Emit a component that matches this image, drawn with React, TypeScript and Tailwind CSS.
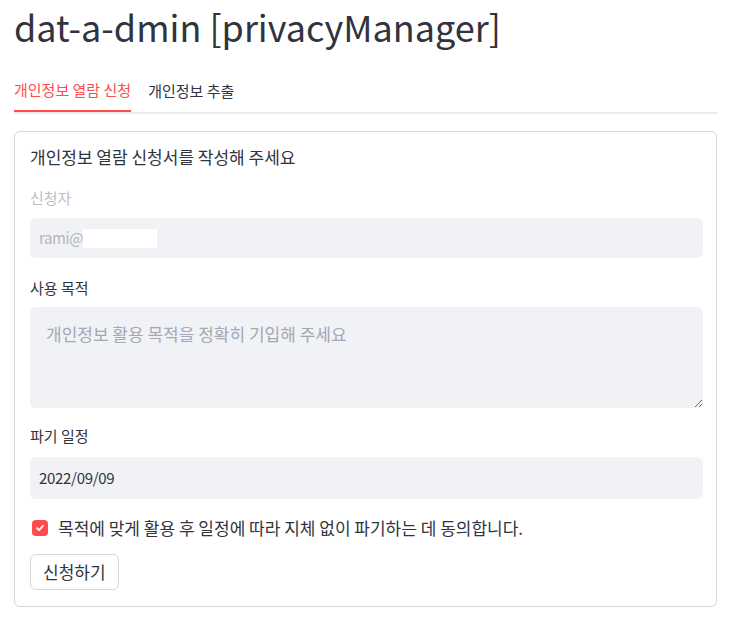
import React from 'react';

const FONT = '"Noto Sans CJK KR", "Noto Sans", sans-serif';

const App: React.FC = () => {
  return (
    <div className="px-[14px] text-[#31333f] bg-white min-h-screen" style={{ fontFamily: FONT }}>
      <h1 className="text-[36px] leading-[52px] font-normal">dat-a-dmin [privacyManager]</h1>

      <div className="mt-[18px] flex gap-[17px] border-b-2 border-[#ececef]">
        <div className="h-[42px] flex items-center text-[15px] text-[#ff4b4b] border-b-2 border-[#ff4b4b] -mb-[2px]">
          개인정보 열람 신청
        </div>
        <div className="h-[42px] flex items-center text-[15px]">개인정보 추출</div>
      </div>

      <div className="mt-[17px] border border-[#d6d6d9] rounded-[6px] pl-[15px] pr-[13px] pt-[13px] pb-[16px]">
        <p className="text-[17px] leading-[24px]">개인정보 열람 신청서를 작성해 주세요</p>

        <label className="block mt-[19px] text-[15px] leading-[20px] text-[#bcbdc2]">신청자</label>
        <div className="mt-[10px] h-[40px] rounded-[6px] bg-[#f0f2f6] flex items-center pl-[9px] text-[15px] text-[#b4b5ba]">
          <span className="tracking-[-0.4px]">rami@</span>
          <span className="inline-block w-[74px] h-[19px] bg-white"></span>
        </div>

        <label className="block mt-[20px] text-[15px] leading-[20px]">사용 목적</label>
        <textarea
          className="mt-[9px] block w-full h-[101px] rounded-[6px] bg-[#f0f2f6] px-[16px] pt-[15px] text-[17px] leading-[24px] outline-none placeholder:text-[#a3a8b4] resize-y"
          style={{ fontFamily: FONT }}
          placeholder="개인정보 활용 목적을 정확히 기입해 주세요"
        />

        <label className="block mt-[18px] text-[15px] leading-[20px]">파기 일정</label>
        <div className="mt-[11px] h-[42px] rounded-[6px] bg-[#f0f2f6] flex items-center pl-[9px] text-[15px] tracking-[-0.3px]">
          2022/09/09
        </div>

        <div className="mt-[17px] flex items-center h-[24px]">
          <span className="ml-[2px] w-[16px] h-[16px] rounded-[4px] bg-[#ff4b4b] flex items-center justify-center">
            <svg width="10" height="10" viewBox="0 0 10 10" fill="none">
              <path d="M2 5.2 L4.1 7.2 L8 2.9" stroke="white" strokeWidth="1.8" strokeLinecap="round" strokeLinejoin="round" />
            </svg>
          </span>
          <span className="ml-[10px] text-[17px] leading-[24px]">
            목적에 맞게 활용 후 일정에 따라 지체 없이 파기하는 데 동의합니다.
          </span>
        </div>

        <button
          className="mt-[14px] h-[36px] px-[12px] rounded-[6px] border border-[#d6d6d9] bg-white text-[17px] text-[#31333f]"
          style={{ fontFamily: FONT }}
        >
          신청하기
        </button>
      </div>
    </div>
  );
};

export default App;
